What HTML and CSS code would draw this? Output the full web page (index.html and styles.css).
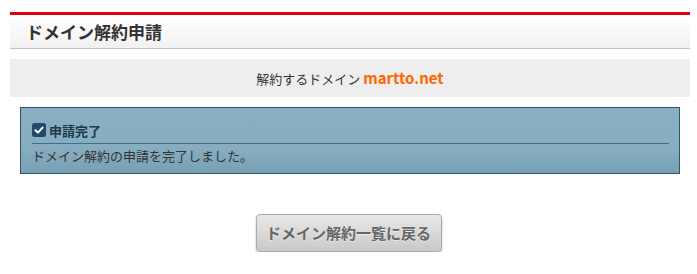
FILE: index.html
```html
<!DOCTYPE html>
<html lang="ja">
<head>
    <meta charset="UTF-8">
    <meta name="viewport" content="width=device-width, initial-scale=1.0">
    <title>ドメイン解約申請</title>
    <link rel="stylesheet" href="styles.css">
</head>
<body>
    <div class="page">
        <h1 class="title">ドメイン解約申請</h1>
        <div class="target">解約するドメイン <span class="domain">martto.net</span></div>
        <div class="notice">
            <div class="notice-head">
                <svg class="check" width="14" height="14" viewBox="0 0 14 14">
                    <rect x="0" y="0" width="14" height="14" rx="2.5" fill="#1f4b68"/>
                    <path d="M3.4 7.2 L5.9 9.6 L10.6 4.6" fill="none" stroke="#fff" stroke-width="2" stroke-linecap="round" stroke-linejoin="round"/>
                </svg>
                申請完了
            </div>
            <div class="notice-body">ドメイン解約の申請を完了しました。</div>
        </div>
        <div class="actions">
            <a class="back" href="#">ドメイン解約一覧に戻る</a>
        </div>
    </div>
</body>
</html>
```

FILE: styles.css
```css
body {
    margin: 0;
    background-color: #fff;
    color: #333;
    font-family: "Noto Sans CJK JP", "Noto Sans", sans-serif;
}
.page {
    width: 680px;
    margin: 12px 0 0 10px;
}
.title {
    margin: 0;
    height: 33px;
    line-height: 33px;
    padding-left: 16px;
    border-top: 3px solid #e50012;
    border-bottom: 1px solid #c0c0c0;
    background: linear-gradient(#ffffff, #f1f1f1);
    font-size: 17px;
    font-weight: bold;
    color: #333;
}
.target {
    margin-top: 10px;
    height: 38px;
    line-height: 38px;
    background-color: #eeeeee;
    text-align: center;
    font-size: 13px;
    color: #333;
}
.domain {
    color: #ff6600;
    font-weight: bold;
    font-size: 15px;
}
.notice {
    margin: 10px 10px 0 10px;
    padding: 12px 10px 7px 11px;
    border: 1px solid #2b5670;
    background: linear-gradient(#8aafc2 0%, #88adc0 60%, #77a0b4 100%);
}
.notice-head {
    display: flex;
    align-items: center;
    gap: 3px;
    height: 20px;
    padding-bottom: 3px;
    border-bottom: 1px solid #3b7090;
    font-size: 13px;
    font-weight: bold;
    color: #1d3a4d;
}
.check {
    display: block;
}
.notice-body {
    margin-top: 2px;
    line-height: 20px;
    font-size: 13px;
    color: #333;
}
.actions {
    margin-top: 40px;
    text-align: center;
    padding-right: 3px;
}
.back {
    display: inline-block;
    width: 184px;
    height: 36px;
    line-height: 36px;
    border: 1px solid #aaaaaa;
    border-radius: 4px;
    background: linear-gradient(#e8e8e8, #c9c9c9);
    box-shadow: 0 1px 2px rgba(0, 0, 0, 0.3);
    color: #666;
    font-size: 15px;
    font-weight: bold;
    text-decoration: none;
    text-shadow: 0 1px 0 rgba(255, 255, 255, 0.5);
}
```
